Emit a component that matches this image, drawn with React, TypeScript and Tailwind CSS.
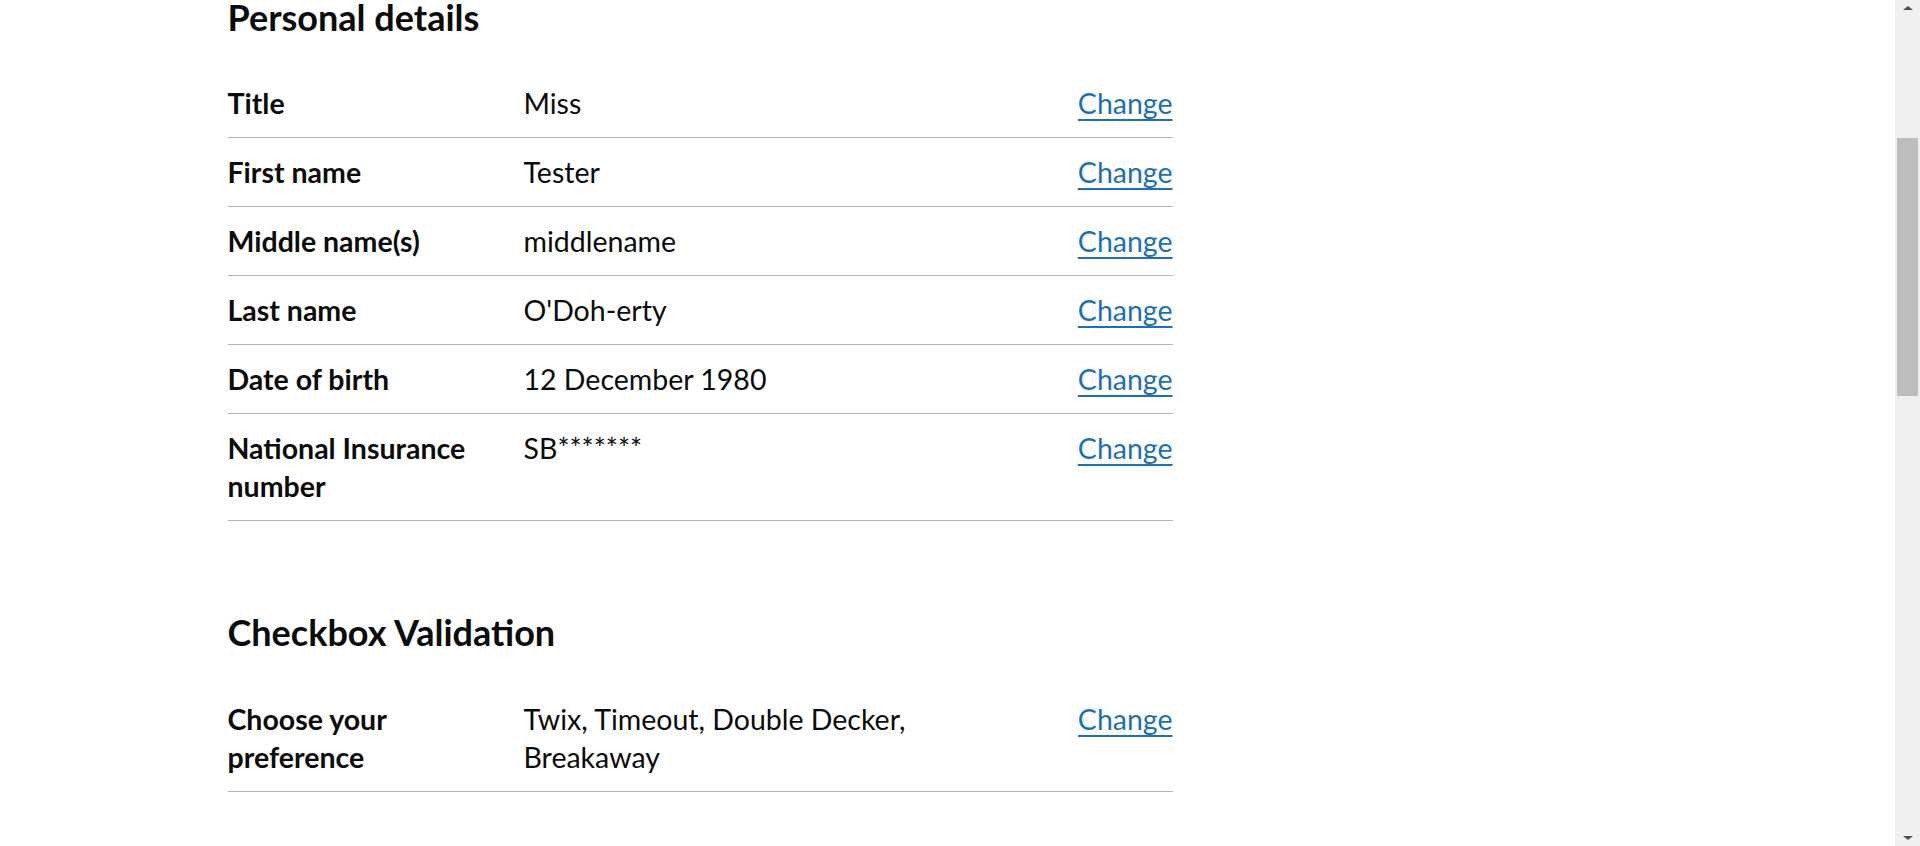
type Row = { key: string; value: string };

const personal: Row[] = [
  { key: 'Title', value: 'Miss' },
  { key: 'First name', value: 'Tester' },
  { key: 'Middle name(s)', value: 'middlename' },
  { key: 'Last name', value: "O'Doh-erty" },
  { key: 'Date of birth', value: '12 December 1980' },
  { key: 'National Insurance number', value: 'SB*******' },
];

const checkbox: Row[] = [{ key: 'Choose your preference', value: 'Twix, Timeout, Double Decker, Breakaway' }];

function SummaryList({ rows }: { rows: Row[] }) {
  return (
    <dl className="flex flex-col">
      {rows.map((row) => (
        <div
          key={row.key}
          className="grid grid-cols-[296px_1fr_189px] border-b border-[#b1b4b6] text-[28.5px] leading-[38px]"
        >
          <dt className="py-[15px] pr-[30px] font-bold">{row.key}</dt>
          <dd className="py-[15px] pr-[30px]">{row.value}</dd>
          <dd className="py-[15px] text-right">
            <a
              href="#"
              className="text-[#1d70b8] underline decoration-[1.5px] underline-offset-[4.5px]"
            >
              Change
            </a>
          </dd>
        </div>
      ))}
    </dl>
  );
}

function Scrollbar() {
  return (
    <div className="w-[25px] h-full bg-[#f0f0f0] flex flex-col items-center shrink-0">
      <div className="mt-[6px] w-0 h-0 border-x-[5px] border-x-transparent border-b-[4px] border-b-[#505050]" />
      <div className="mt-[128px] w-[21px] h-[258px] bg-[#bdbdbd]" />
      <div className="mt-auto mb-[6px] w-0 h-0 border-x-[5px] border-x-transparent border-t-[4px] border-t-[#505050]" />
    </div>
  );
}

export default function App() {
  return (
    <div
      className="h-[846px] w-full flex overflow-hidden bg-white text-[#0b0c0c]"
      style={{ fontFamily: 'Lato, "Liberation Sans", Arial, sans-serif' }}
    >
      <main className="flex-1 min-w-0">
        <div className="w-[1440px] mx-auto pt-[2px]">
          <div className="w-[945px]">
            {/* page is scrolled: the heading sits tight against the top edge */}
            <h2 className="text-[36px] leading-[30px] font-bold mb-[37px]">Personal details</h2>
            <SummaryList rows={personal} />

            <h2 className="text-[36px] leading-[45px] font-bold mt-[89px] mb-[30px]">Checkbox Validation</h2>
            <SummaryList rows={checkbox} />
          </div>
        </div>
      </main>
      <Scrollbar />
    </div>
  );
}
